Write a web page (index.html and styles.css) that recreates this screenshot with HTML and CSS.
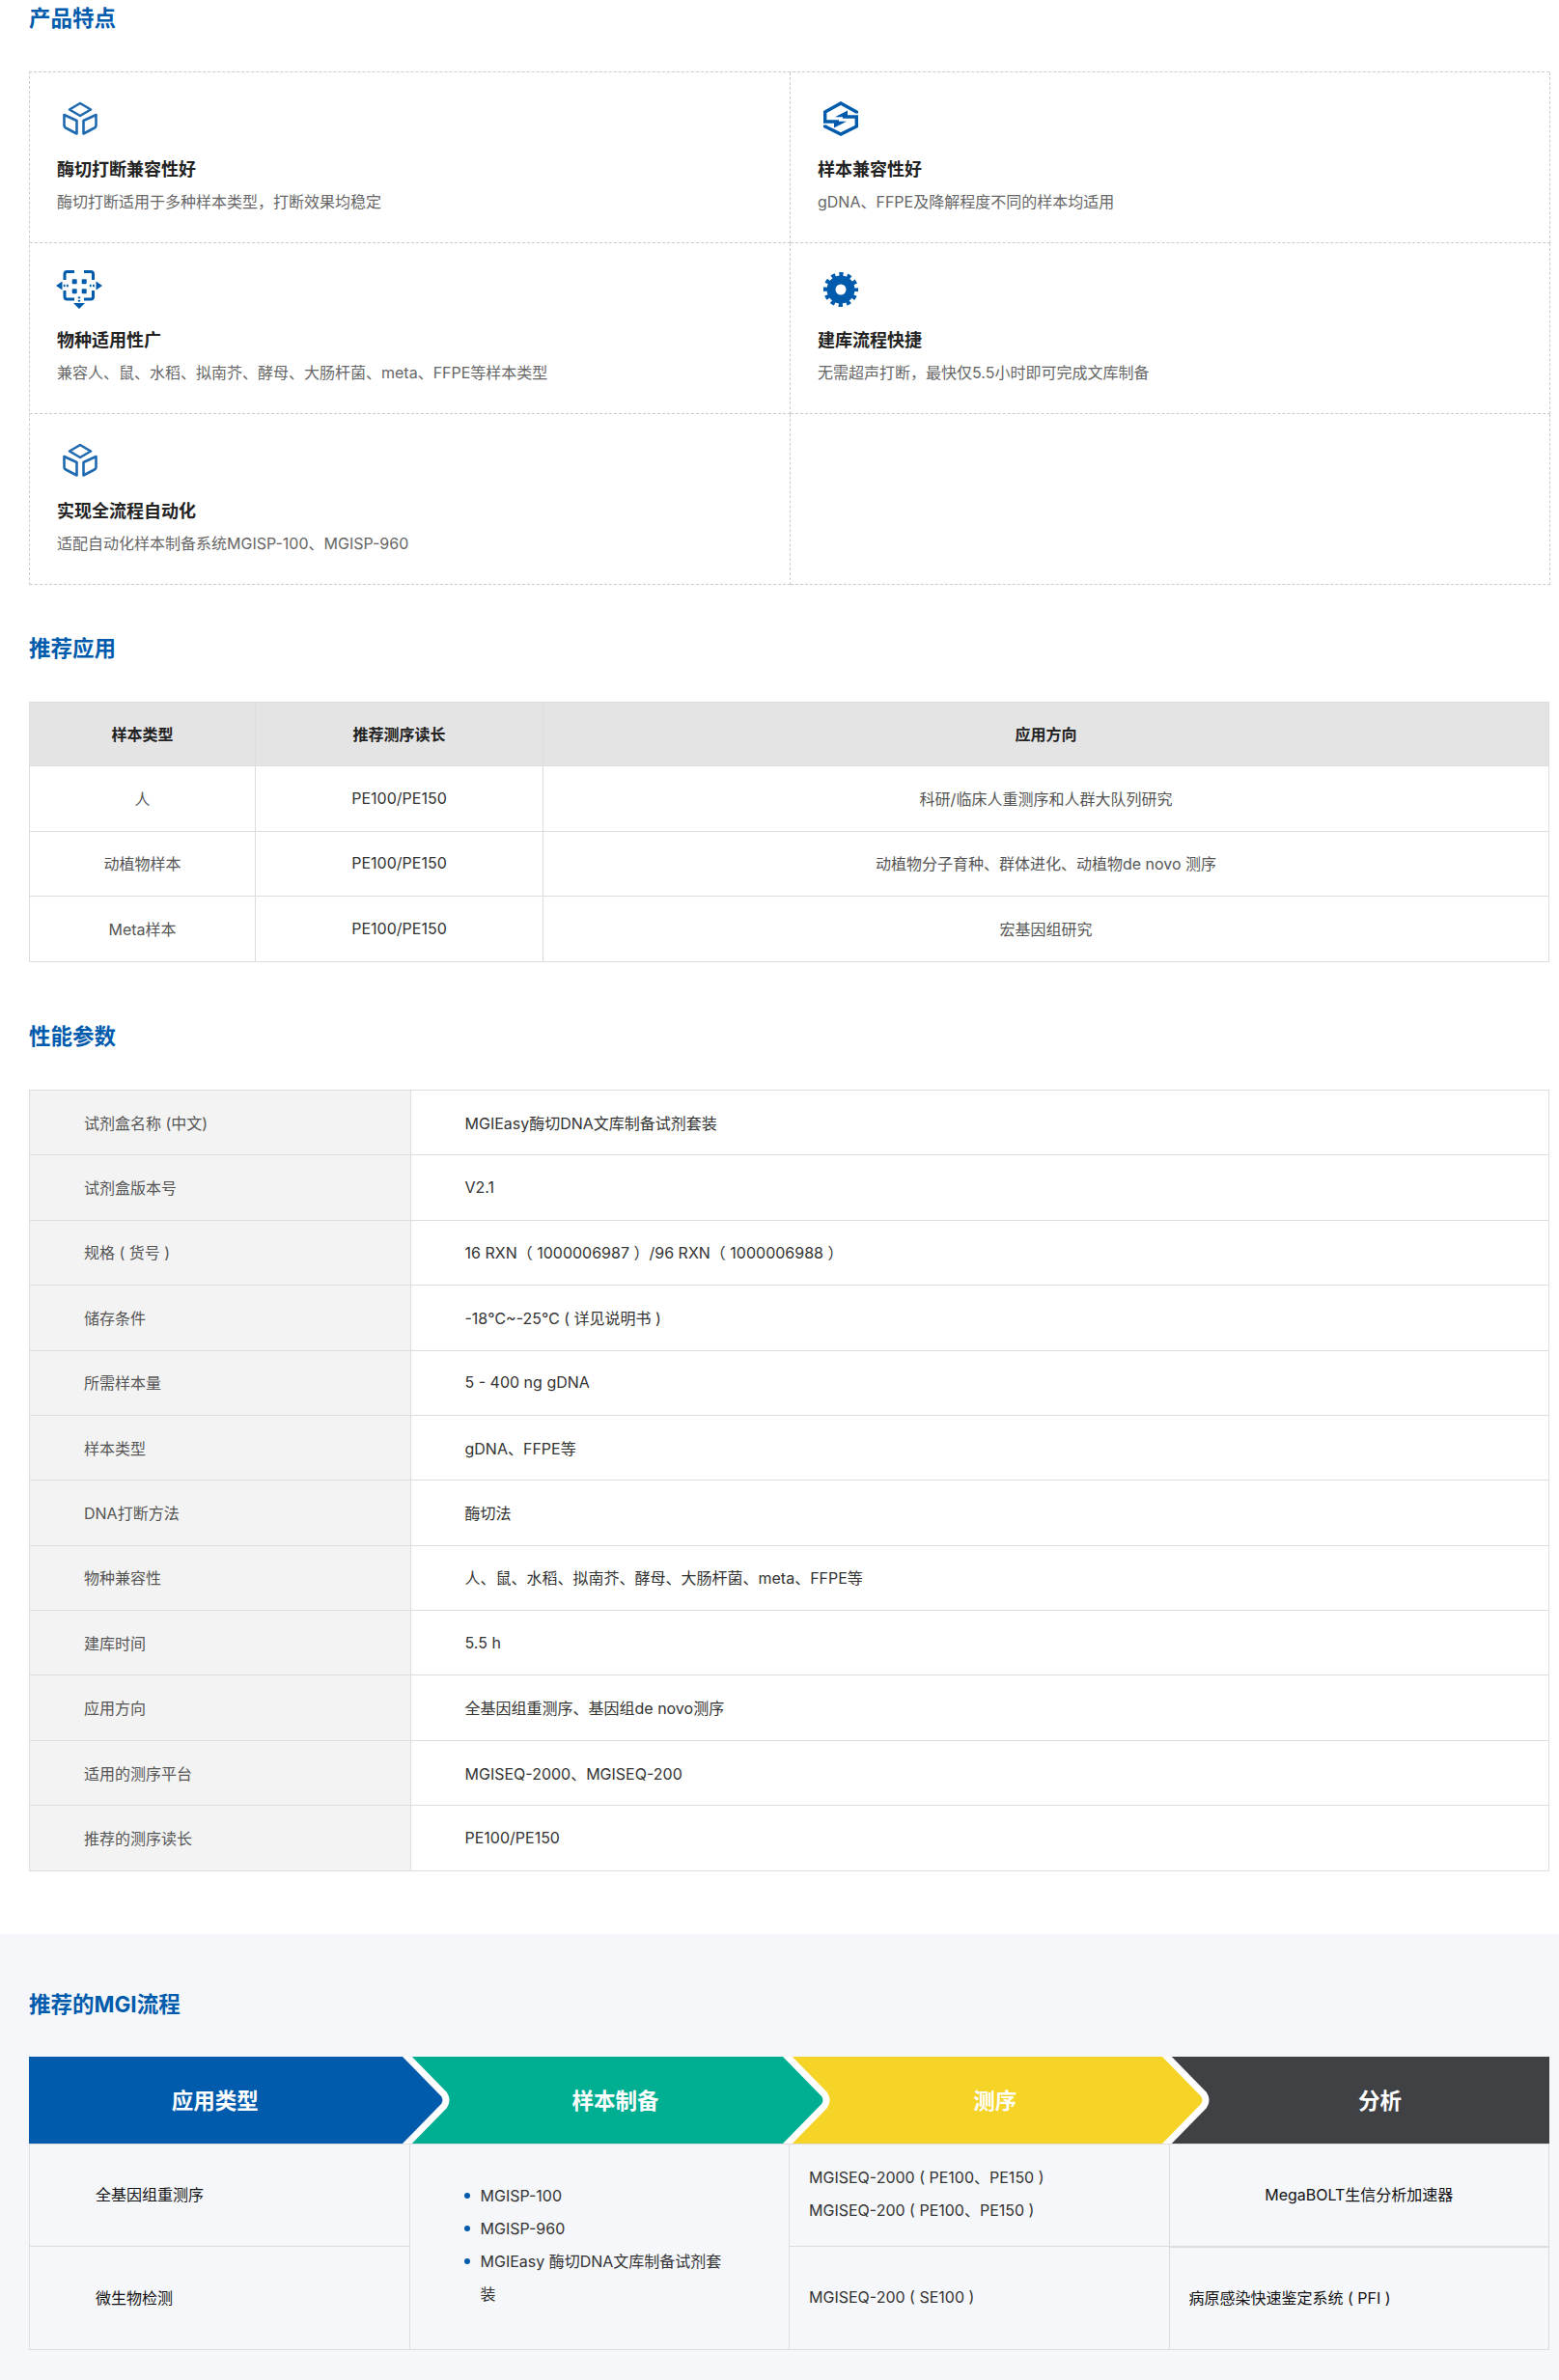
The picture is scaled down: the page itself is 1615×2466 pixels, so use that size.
FILE: index.html
```html
<!DOCTYPE html>
<html lang="zh-CN">
<head>
<meta charset="utf-8">
<title>MGIEasy酶切DNA文库制备试剂套装</title>
<link rel="stylesheet" href="styles.css">
</head>
<body>
<main class="wrap">
  <h2 class="heading heading-first">产品特点</h2>
  <div class="features">
    <div class="feature">
      <svg class="ficon" viewBox="0 0 36 36" fill="none" stroke="#1f69b0" stroke-width="2.6" stroke-linejoin="round"><path d="M18 2 29 8.5 18 15 7 8.5Z"/><path d="M1.5 14 14.5 20V33.5L4 28Q1.5 27 1.5 25Z"/><path d="M34.5 14 21.5 20V33.5L32 28Q34.5 27 34.5 25Z"/></svg>
      <h3 class="ftitle">酶切打断兼容性好</h3>
      <p class="fdesc">酶切打断适用于多种样本类型，打断效果均稳定</p>
    </div>
    <div class="feature">
      <svg class="ficon" viewBox="0 0 36 36"><g fill="none" stroke="#005bac" stroke-width="3.4"><path d="M34.300 12.500V11L18 2 1.700 11V21H16"/><path d="M1.700 24.500V26L18 34 34.300 26V16H20"/></g><path d="M25 9.500 12 16.200H25Z" fill="#005bac"/><path d="M11 27.500 24 20.800H11Z" fill="#005bac"/></svg>
      <h3 class="ftitle">样本兼容性好</h3>
      <p class="fdesc">gDNA、FFPE及降解程度不同的样本均适用</p>
    </div>
    <div class="feature">
      <svg class="ficon ficon-net" viewBox="0 0 48 40" fill="#005bac"><g fill="none" stroke="#005bac" stroke-width="3"><path d="M9 10V4Q9 1.500 11.500 1.500H19"/><path d="M29 1.500H36Q38.500 1.500 38.500 4V10"/><path d="M9 21V27.500Q9 30 11.500 30H19"/><path d="M29 30H36Q38.500 30 38.500 27.500V21"/></g><rect x="16.700" y="9.300" width="5" height="5" rx="0.800"/><rect x="26.700" y="9.300" width="5" height="5" rx="0.800"/><rect x="16.700" y="19.300" width="5" height="5" rx="0.800"/><rect x="26.700" y="19.300" width="5" height="5" rx="0.800"/><path d="M0 16 6.500 11.500V20.500ZM48 16 41.500 11.500V20.500ZM24 40 18 34H30Z"/><rect x="7.800" y="14.800" width="1.800" height="2.400"/><rect x="11" y="14.800" width="1.800" height="2.400"/><rect x="34.800" y="14.800" width="1.800" height="2.400"/><rect x="38" y="14.800" width="1.800" height="2.400"/><rect x="22.800" y="27.500" width="2.400" height="1.800"/><rect x="22.800" y="30.800" width="2.400" height="1.800"/></svg>
      <h3 class="ftitle">物种适用性广</h3>
      <p class="fdesc">兼容人、鼠、水稻、拟南芥、酵母、大肠杆菌、meta、FFPE等样本类型</p>
    </div>
    <div class="feature">
      <svg class="ficon" viewBox="0 0 36 36" fill="none" stroke="#005bac"><circle cx="18" cy="18" r="10" stroke-width="9"/><circle cx="18" cy="18" r="15.500" stroke-width="5" stroke-dasharray="4.200 3.915" stroke-dashoffset="2.100"/></svg>
      <h3 class="ftitle">建库流程快捷</h3>
      <p class="fdesc">无需超声打断，最快仅5.5小时即可完成文库制备</p>
    </div>
    <div class="feature">
      <svg class="ficon" viewBox="0 0 36 36" fill="none" stroke="#1f69b0" stroke-width="2.6" stroke-linejoin="round"><path d="M18 2 29 8.5 18 15 7 8.5Z"/><path d="M1.5 14 14.5 20V33.5L4 28Q1.5 27 1.5 25Z"/><path d="M34.5 14 21.5 20V33.5L32 28Q34.5 27 34.5 25Z"/></svg>
      <h3 class="ftitle">实现全流程自动化</h3>
      <p class="fdesc">适配自动化样本制备系统MGISP-100、MGISP-960</p>
    </div>
    <div class="feature"></div>
  </div>

  <h2 class="heading heading-app">推荐应用</h2>
  <table class="apps">
    <colgroup><col class="ac1"><col class="ac2"><col class="ac3"></colgroup>
    <thead><tr><th>样本类型</th><th>推荐测序读长</th><th>应用方向</th></tr></thead>
    <tbody>
      <tr><td>人</td><td class="dark">PE100/PE150</td><td>科研/临床人重测序和人群大队列研究</td></tr>
      <tr><td>动植物样本</td><td class="dark">PE100/PE150</td><td>动植物分子育种、群体进化、动植物de novo 测序</td></tr>
      <tr><td>Meta样本</td><td class="dark">PE100/PE150</td><td>宏基因组研究</td></tr>
    </tbody>
  </table>

  <h2 class="heading heading-param">性能参数</h2>
  <table class="params">
    <colgroup><col class="pc1"><col></colgroup>
    <tbody>
      <tr><th>试剂盒名称 (中文)</th><td>MGIEasy酶切DNA文库制备试剂套装</td></tr>
      <tr><th>试剂盒版本号</th><td>V2.1</td></tr>
      <tr><th>规格 ( 货号 )</th><td>16 RXN（ 1000006987 ）/96 RXN（ 1000006988 ）</td></tr>
      <tr><th>储存条件</th><td>-18℃~-25℃ ( 详见说明书 )</td></tr>
      <tr><th>所需样本量</th><td>5 - 400 ng gDNA</td></tr>
      <tr><th>样本类型</th><td>gDNA、FFPE等</td></tr>
      <tr><th>DNA打断方法</th><td>酶切法</td></tr>
      <tr><th>物种兼容性</th><td>人、鼠、水稻、拟南芥、酵母、大肠杆菌、meta、FFPE等</td></tr>
      <tr><th>建库时间</th><td>5.5 h</td></tr>
      <tr><th>应用方向</th><td>全基因组重测序、基因组de novo测序</td></tr>
      <tr><th>适用的测序平台</th><td>MGISEQ-2000、MGISEQ-200</td></tr>
      <tr><th>推荐的测序读长</th><td>PE100/PE150</td></tr>
    </tbody>
  </table>
</main>

<section class="flow">
  <h2 class="heading heading-flow">推荐的MGI流程</h2>
  <div class="chevrons">
    <svg class="chevron-art" viewBox="0 0 1575 90" aria-hidden="true">
      <rect width="1575" height="90" fill="#404145"/>
      <path d="M0 0H1179L1217 39Q1221 45 1217 51L1179 90H0Z" fill="#f5d327"/>
      <path d="M0 0H786L824 39Q828 45 824 51L786 90H0Z" fill="#00ae91"/>
      <path d="M0 0H392L430 39Q434 45 430 51L392 90H0Z" fill="#005bac"/>
      <g fill="none" stroke="#fff" stroke-width="7">
        <path d="M388-4 430 39Q434 45 430 51L388 94"/>
        <path d="M782-4 824 39Q828 45 824 51L782 94"/>
        <path d="M1175-4 1217 39Q1221 45 1217 51L1175 94"/>
      </g>
    </svg>
    <div class="seg seg1">应用类型</div>
    <div class="seg seg2">样本制备</div>
    <div class="seg seg3">测序</div>
    <div class="seg seg4">分析</div>
  </div>
  <table class="flow-table">
    <tbody>
      <tr>
        <td class="type">全基因组重测序</td>
        <td class="prep" rowspan="2">
          <ul class="bullets">
            <li>MGISP-100</li>
            <li>MGISP-960</li>
            <li>MGIEasy 酶切DNA文库制备试剂套装</li>
          </ul>
        </td>
        <td class="seq"><div>MGISEQ-2000 ( PE100、PE150 )</div><div>MGISEQ-200 ( PE100、PE150 )</div></td>
        <td class="center">MegaBOLT生信分析加速器</td>
      </tr>
      <tr>
        <td class="type">微生物检测</td>
        <td class="seq">MGISEQ-200 ( SE100 )</td>
        <td class="ana">病原感染快速鉴定系统 ( PFI )</td>
      </tr>
    </tbody>
  </table>
</section>
</body>
</html>
```
FILE: styles.css
```css
* { box-sizing: border-box; }
html, body { margin: 0; padding: 0; }
body {
  background: #fff;
  font-family: Inter, "Noto Sans CJK SC", sans-serif;
  font-size: 16px;
  color: #333;
}
.wrap { padding: 0 10px 0 30px; }
.heading {
  margin: 0;
  font-size: 22.500px;
  line-height: 30px;
  font-weight: 700;
  color: #005bac;
}
.heading-first { padding-top: 4px; margin-bottom: 40px; }
.heading-app { margin-top: 51px; margin-bottom: 40px; }
.heading-param { margin-top: 62px; margin-bottom: 40px; }
.heading-flow { margin-bottom: 39px; }

.features {
  display: grid;
  grid-template-columns: 788px 787px;
  grid-auto-rows: 177px;
  border-top: 1px dashed #ccc;
  border-left: 1px dashed #ccc;
}
.feature {
  padding: 30px 28px 0;
  border-right: 1px dashed #ccc;
  border-bottom: 1px dashed #ccc;
}
.ficon { display: block; width: 36px; height: 36px; margin-left: 6px; }
.ficon-net { width: 48px; height: 40px; margin: -2px 0 -2px -1px; }
.ftitle {
  margin: 22px 0 0;
  font-size: 18px;
  line-height: 26px;
  font-weight: 700;
  color: #222;
}
.fdesc {
  margin: 8px 0 0;
  font-size: 16px;
  line-height: 24px;
  color: #666;
}

table { border-collapse: collapse; width: 1575px; table-layout: fixed; }
.ac1 { width: 234px; }
.ac2 { width: 298px; }
.apps th, .apps td {
  border: 1px solid #ddd;
  text-align: center;
  height: 67.670px;
  padding: 0 0 1px;
  font-size: 16px;
  color: #555;
  font-weight: 400;
}
.apps th { height: 66px; padding-bottom: 2px; background: #e4e4e4; color: #222; font-weight: 700; }
.apps td.dark { color: #333; }

.pc1 { width: 394.500px; }
.params th, .params td {
  border: 1px solid #ddd;
  height: 67.400px;
  padding: 0 0 1px 56px;
  text-align: left;
  font-size: 16px;
  font-weight: 400;
}
.params th { background: #f3f3f3; color: #555; }
.params td { color: #333; }

.flow {
  margin-top: 65px;
  padding: 58px 10px 32px 30px;
  background: #f6f7fb;
}
.chevrons {
  position: relative;
  display: grid;
  grid-template-columns: repeat(4, 1fr);
  height: 90px;
}
.chevron-art { position: absolute; left: 0; top: 0; width: 1575px; height: 90px; }
.seg {
  position: relative;
  display: flex;
  align-items: center;
  justify-content: center;
  color: #fff;
  font-size: 22.500px;
  font-weight: 700;
}
.seg1 { padding: 0 8px 2px 0; }
.seg2 { padding: 0 0 2px 34px; }
.seg3 { padding: 0 0 2px 33px; }
.seg4 { padding: 0 0 2px 43px; }

.flow-table td {
  width: 25%;
  height: 106.500px;
  border: 1px solid #ddd;
  padding: 0;
  color: #111;
  font-size: 16px;
}
.flow-table td.type { padding-left: 68px; padding-bottom: 2px; }
.flow-table td.seq { padding-left: 20px; padding-bottom: 2px; color: #333; line-height: 34px; }
.flow-table td.center { text-align: center; padding-bottom: 2px; border-bottom: 2px solid #ddd; }
.flow-table td.ana { padding-left: 20px; padding-bottom: 2px; }
.flow-table td.prep { padding-bottom: 3px; }
.bullets { margin: 0; padding: 0 60px 0 56px; list-style: none; color: #333; line-height: 34px; }
.bullets li { position: relative; padding-left: 17px; }
.bullets li::before {
  content: "";
  position: absolute;
  left: 0;
  top: 14px;
  width: 6px;
  height: 6px;
  border-radius: 50%;
  background: #005bac;
}
```
